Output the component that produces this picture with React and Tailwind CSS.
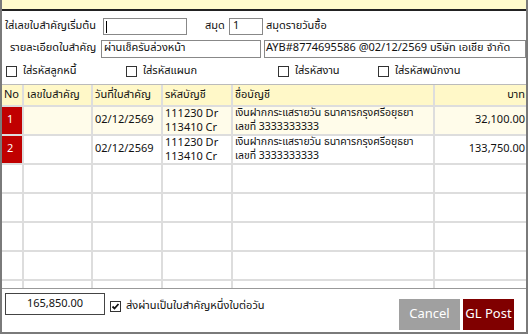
import { useState } from 'react'

const rows = [
  { no: 1, date: '02/12/2569', acc: ['111230 Dr', '113410 Cr'], name: ['เงินฝากกระแสรายวัน ธนาคารกรุงศรีอยุธยา', 'เลขที่ 3333333333'], amt: '32,100.00' },
  { no: 2, date: '02/12/2569', acc: ['111230 Dr', '113410 Cr'], name: ['เงินฝากกระแสรายวัน ธนาคารกรุงศรีอยุธยา', 'เลขที่ 3333333333'], amt: '133,750.00' },
]

function Check({ checked }) {
  return (
    <span className="w-[11px] h-[11px] border border-[#333] bg-white flex items-center justify-center shrink-0">
      {checked && (
        <svg width="9" height="9" viewBox="0 0 9 9">
          <path d="M1.5 4.5 L3.5 6.5 L7.5 2" stroke="#111" strokeWidth="1.8" fill="none" />
        </svg>
      )}
    </span>
  )
}

function App() {
  const [oneVoucher, setOneVoucher] = useState(true)

  return (
    <div className="w-[528px] h-[334px] bg-white text-[11px] text-[#111] overflow-hidden border-l-2 border-r-2 border-b-2 border-[#7a7a7a] flex flex-col whitespace-nowrap" style={{ fontFamily: 'Tahoma, "Noto Sans Thai", "Liberation Sans", "Noto Sans", sans-serif' }}>
      {/* title strip */}
      <div className="h-[11px] bg-[#fffbcc] border-b-2 border-[#222] shrink-0" />

      {/* header form */}
      <div className="flex items-center h-[21px] mt-[5px] shrink-0">
        <span className="pl-[3px] w-[101px] overflow-hidden">ใส่เลขใบสำคัญเริ่มต้น</span>
        <div className="w-[84px] h-[17px] border border-[#888] flex items-center pl-[2px]">
          <span className="w-px h-[12px] bg-black" />
        </div>
        <span className="ml-[18px] w-[24px]">สมุด</span>
        <div className="w-[34px] h-[17px] border border-[#888] flex items-center pl-[3px]">1</div>
        <span className="ml-[3px]">สมุดรายวันซื้อ</span>
      </div>
      <div className="flex items-center h-[21px] mt-[1px] shrink-0">
        <span className="pl-[8px] w-[99px] overflow-hidden">รายละเอียดใบสำคัญ</span>
        <div className="w-[160px] h-[18px] border border-[#888] flex items-center pl-[2px]">ผ่านเช็ครับล่วงหน้า</div>
        <div className="ml-[3px] flex-1 min-w-0 h-[18px] border border-[#888] flex items-center pl-[1px] overflow-hidden">AYB#8774695586 @02/12/2569 บริษัท เอเชีย จำกัด</div>
      </div>
      <div className="flex items-center h-[18px] mt-[3px] shrink-0">
        <label className="flex items-center gap-[6px] pl-[4px] w-[124px]"><Check />ใส่รหัสลูกหนี้</label>
        <label className="flex items-center gap-[6px] w-[152px]"><Check />ใส่รหัสแผนก</label>
        <label className="flex items-center gap-[6px] w-[100px]"><Check />ใส่รหัสงาน</label>
        <label className="flex items-center gap-[6px]"><Check />ใส่รหัสพนักงาน</label>
      </div>

      {/* grid */}
      <div className="mt-[4px] border-t border-[#bbb] h-[204px] overflow-hidden shrink-0">
        <table className="w-full border-collapse table-fixed">
          <colgroup>
            <col className="w-[21px]" />
            <col className="w-[69px]" />
            <col className="w-[70px]" />
            <col className="w-[70px]" />
            <col className="w-[202px]" />
            <col />
          </colgroup>
          <thead>
            <tr className="h-[21px] bg-[#fff8c8]">
              <th className="font-normal text-left pl-[2px] border-r-2 border-b-2 border-[#ddd]">No</th>
              <th className="font-normal text-left pl-[3px] border-r-2 border-b-2 border-[#ddd] overflow-hidden">เลขใบสำคัญ</th>
              <th className="font-normal text-left pl-[2px] border-r-2 border-b-2 border-[#ddd] overflow-hidden">วันที่ใบสำคัญ</th>
              <th className="font-normal text-left pl-[2px] border-r-2 border-b-2 border-[#ddd]">รหัสบัญชี</th>
              <th className="font-normal text-left pl-[2px] border-r-2 border-b-2 border-[#ddd]">ชื่อบัญชี</th>
              <th className="font-normal text-right pr-[1px] border-b-2 border-[#ddd]">บาท</th>
            </tr>
          </thead>
          <tbody>
            {rows.map((r, i) => (
              <tr key={r.no} className={`h-[29px] ${i === 0 ? 'bg-[#fffcea]' : 'bg-white'}`}>
                <td className="p-0 border-r-2 border-b-2 border-[#ddd]">
                  <div className="h-[27px] bg-[#c00000] text-white pl-[5px] flex items-center">{r.no}</div>
                </td>
                <td className="border-r-2 border-b-2 border-[#ddd]" />
                <td className="pl-[2px] border-r-2 border-b-2 border-[#ddd]">{r.date}</td>
                <td className="pl-[2px] p-0 border-r-2 border-b-2 border-[#ddd]">
                  <div className="h-[13.5px] leading-[13.5px]">{r.acc[0]}</div>
                  <div className="h-[13.5px] leading-[13.5px]">{r.acc[1]}</div>
                </td>
                <td className="pl-[2px] p-0 border-r-2 border-b-2 border-[#ddd] overflow-hidden text-[10.5px]">
                  <div className="h-[13.5px] leading-[13.5px]">{r.name[0]}</div>
                  <div className="h-[13.5px] leading-[13.5px]">{r.name[1]}</div>
                </td>
                <td className="text-right pr-[1px] border-b-2 border-[#ddd]">{r.amt}</td>
              </tr>
            ))}
            {[0, 1, 2, 3, 4].map(k => (
              <tr key={k} className="h-[29px]">
                <td className="border-r-2 border-b-2 border-[#ddd]" />
                <td className="border-r-2 border-b-2 border-[#ddd]" />
                <td className="border-r-2 border-b-2 border-[#ddd]" />
                <td className="border-r-2 border-b-2 border-[#ddd]" />
                <td className="border-r-2 border-b-2 border-[#ddd]" />
                <td className="border-b-2 border-[#ddd]" />
              </tr>
            ))}
          </tbody>
        </table>
      </div>

      {/* footer */}
      <div className="flex flex-1 border-t border-[#999]">
        <div className="flex items-start pt-[4px] pl-[3px]">
          <div className="w-[100px] h-[22px] border border-[#444] flex items-center justify-center">165,850.00</div>
          <label className="ml-[5px] mt-[5px] flex items-center gap-[5px]" onClick={() => setOneVoucher(v => !v)}>
            <Check checked={oneVoucher} />
            ส่งผ่านเป็นใบสำคัญหนึ่งใบต่อวัน
          </label>
        </div>
        <div className="ml-auto flex items-start gap-[3px] pt-[10px] pr-[12px]">
          <button className="w-[61px] h-[31px] bg-[#a0a0a0] text-white text-[13px]">Cancel</button>
          <button className="w-[51px] h-[31px] bg-[#800000] text-white text-[13px]">GL Post</button>
        </div>
      </div>
    </div>
  )
}

export default App
